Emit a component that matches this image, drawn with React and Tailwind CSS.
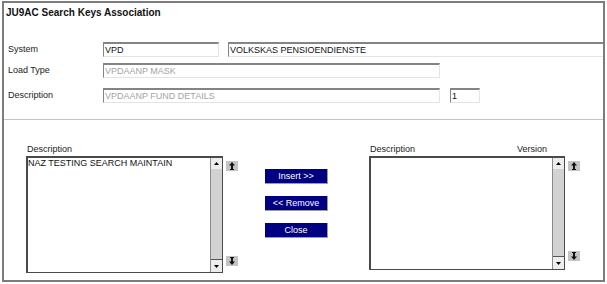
const TriUp = () => (
    <svg width="5" height="3" viewBox="0 0 5 3"><path d="M0 3 L2.5 0 L5 3 Z" fill="#000"/></svg>
)
const TriDown = () => (
    <svg width="5" height="3" viewBox="0 0 5 3"><path d="M0 0 L2.5 3 L5 0 Z" fill="#000"/></svg>
)

const ArrowBtn = ({down}) => (
    <div className="w-[12px] h-[10px] bg-[#c4c4c4] flex items-center justify-center">
        <svg width="6" height="8" viewBox="0 0 6 8">
            {down ? (
                <path d="M3 8 L0 4.5 H2 V1 H1 V0 H5 V1 H4 V4.5 H6 Z" fill="#111"/>
            ) : (
                <path d="M3 0 L6 3.5 H4 V7 H5 V8 H1 V7 H2 V3.5 H0 Z" fill="#111"/>
            )}
        </svg>
    </div>
)

const TextBox = ({value, muted, className = ""}) => (
    <div
        className={`h-[15px] border-t-2 border-l border-b border-r border-t-[#848484] border-l-[#848484] border-b-[#e4e4e4] border-r-[#e4e4e4] bg-white pl-[1px] text-[9px] leading-[12px] whitespace-nowrap overflow-hidden ${muted ? "text-[#a4a4a4]" : "text-[#111]"} ${className}`}
    >
        {value}
    </div>
)

const ListBox = ({width, height, children}) => (
    <div className={`flex border border-t-2 border-l-2 border-[#4a4a4a] bg-white ${width} ${height}`}>
        <div className="flex-1 text-[9px] leading-[11px] text-[#111] whitespace-nowrap overflow-hidden">{children}</div>
        <div className="w-[12px] flex flex-col border-l border-[#8a8a8a]">
            <div className="h-[11px] bg-[#ededed] flex items-center justify-center"><TriUp/></div>
            <div className="flex-1 bg-[#d2d2d2] border-b border-[#555]"></div>
            <div className="h-[12px] bg-[#ededed] flex items-center justify-center"><TriDown/></div>
        </div>
    </div>
)

const NavyButton = ({label}) => (
    <div className="w-[63px] h-[15px] bg-[#000080] border-b border-r border-[#9a9aa8] text-white text-[9px] leading-[14px] text-center">
        {label}
    </div>
)

const Row = ({label, children, className = ""}) => (
    <div className={`flex items-center h-[15px] ${className}`}>
        <div className="w-[99px] pl-[4px] text-[9px] text-[#222]">{label}</div>
        {children}
    </div>
)

export default function App() {
    return (
        <div className="w-[607px] h-[284px] bg-white overflow-hidden" style={{fontFamily: '"Liberation Sans", Arial, sans-serif'}}>
            <div className="ml-[2px] mt-[1px] w-[603px] h-[281px] border-2 border-[#7c7c7c] flex flex-col">
                <div className="mt-[4px] pl-[2px] h-[12px] text-[10px] leading-[12px] font-bold text-[#111]">
                    JU9AC Search Keys Association
                </div>

                <Row label="System" className="mt-[23px]">
                    <TextBox value="VPD" className="w-[116px]"/>
                    <TextBox value="VOLKSKAS PENSIOENDIENSTE" className="flex-1 ml-[9px] border-r-0"/>
                </Row>
                <Row label="Load Type" className="mt-[6px]">
                    <TextBox value="VPDAANP MASK" muted className="w-[337px]"/>
                </Row>
                <Row label="Description" className="mt-[10px]">
                    <TextBox value="VPDAANP FUND DETAILS" muted className="w-[337px]"/>
                    <TextBox value="1" className="w-[30px] ml-[10px]"/>
                </Row>

                <div className="mt-[16px] h-px bg-[#c4c4c4]"></div>

                <div className="flex items-start pl-[22px]">
                    <div className="pt-[24px]">
                        <div className="h-[11px] text-[9px] leading-[11px] text-[#222] pl-[1px]">Description</div>
                        <div className="flex mt-[1px]">
                            <ListBox width="w-[197px]" height="h-[117px]">NAZ TESTING SEARCH MAINTAIN</ListBox>
                            <div className="ml-[3px] flex flex-col justify-between pt-[5px] pb-[7px]">
                                <ArrowBtn/>
                                <ArrowBtn down/>
                            </div>
                        </div>
                    </div>

                    <div className="ml-[27px] pt-[49px] flex flex-col gap-[12px]">
                        <NavyButton label="Insert >>"/>
                        <NavyButton label="<< Remove"/>
                        <NavyButton label="Close"/>
                    </div>

                    <div className="ml-[41px] pt-[24px]">
                        <div className="w-[196px] h-[11px] flex justify-between text-[9px] leading-[11px] text-[#222] pl-[1px] pr-[18px]">
                            <span>Description</span>
                            <span>Version</span>
                        </div>
                        <div className="flex mt-[1px]">
                            <ListBox width="w-[196px]" height="h-[114px]"></ListBox>
                            <div className="ml-[3px] flex flex-col justify-between pt-[5px] pb-[9px]">
                                <ArrowBtn/>
                                <ArrowBtn down/>
                            </div>
                        </div>
                    </div>
                </div>
            </div>
        </div>
    )
}
